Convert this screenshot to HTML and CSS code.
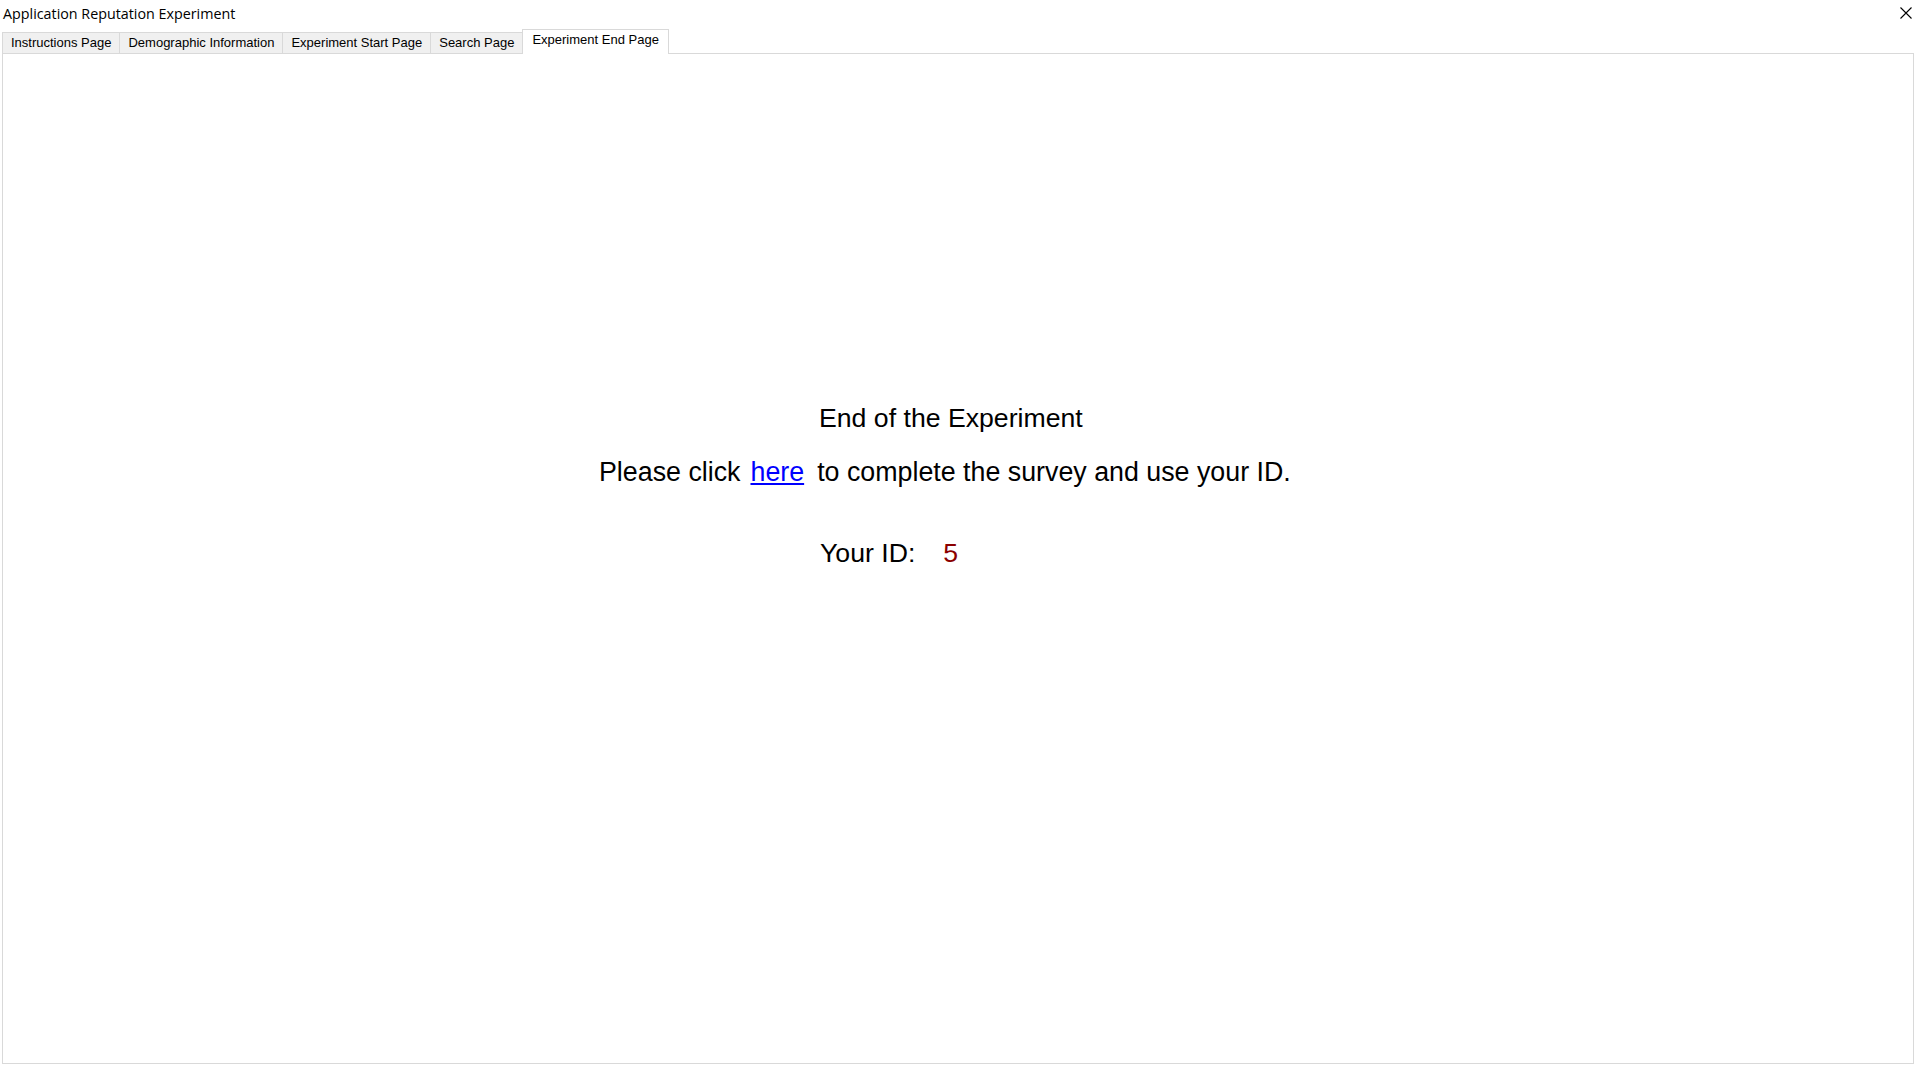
FILE: index.html
```html
<!DOCTYPE html>
<html>
<head>
<meta charset="utf-8">
<title>Application Reputation Experiment</title>
<link rel="stylesheet" href="styles.css">
</head>
<body>
<div class="window">
  <div class="titlebar">
    <span class="title">Application Reputation Experiment</span>
    <span class="close" aria-label="Close">
      <svg width="12" height="12" viewBox="0 0 12 12"><path d="M0.5 0.5 L11.5 11.5 M11.5 0.5 L0.5 11.5" stroke="#000" stroke-width="1.1" fill="none"/></svg>
    </span>
  </div>
  <div class="tabs">
    <div class="tab">Instructions Page</div>
    <div class="tab">Demographic Information</div>
    <div class="tab">Experiment Start Page</div>
    <div class="tab">Search Page</div>
    <div class="tab tab-active">Experiment End Page</div>
  </div>
  <div class="panel">
    <div class="heading">End of the Experiment</div>
    <div class="sentence">
      <span>Please click</span>
      <a class="link" href="#">here</a>
      <span class="rest">to complete the survey and use your ID.</span>
    </div>
    <div class="idrow">
      <span>Your ID:</span>
      <span class="idval">5</span>
    </div>
  </div>
</div>
</body>
</html>
```
FILE: styles.css
```css
html, body {
  margin: 0;
  padding: 0;
  background: #ffffff;
}
.window {
  width: 1920px;
  height: 1080px;
  display: flex;
  flex-direction: column;
  background: #ffffff;
}
.titlebar {
  height: 29px;
  display: flex;
  align-items: flex-start;
  justify-content: space-between;
  padding: 0 8px 0 3px;
}
.title {
  font-family: "Segoe UI", "Open Sans", "Noto Sans", sans-serif;
  font-size: 14.3px;
  color: #000;
  line-height: 20px;
  margin-top: 4px;
}
.close {
  display: flex;
  margin-top: 7px;
}
.tabs {
  height: 24px;
  display: flex;
  align-items: flex-end;
  padding-left: 2px;
  position: relative;
  z-index: 1;
}
.tab {
  font-family: "Liberation Sans", Arial, sans-serif;
  font-size: 13px;
  color: #000;
  height: 21px;
  line-height: 20px;
  padding: 0 8px;
  background: #f0f0f0;
  border: 1px solid #d9d9d9;
  border-bottom: none;
  box-sizing: border-box;
  margin-right: -1px;
  white-space: nowrap;
}
.tab-active {
  height: 25px;
  line-height: 20px;
  background: #ffffff;
  margin: 0 -2px -1px 0;
  padding: 0 9px;
  border-bottom: none;
}
.panel {
  flex: 1;
  margin: 0 6px 16px 2px;
  border: 1px solid #d9d9d9;
  padding-top: 349px;
  display: flex;
  flex-direction: column;
  align-items: flex-start;
  font-family: "Liberation Sans", Arial, sans-serif;
  font-size: 26.67px;
  line-height: 31px;
  color: #000;
}
.heading {
  margin-left: 816px;
}
.sentence {
  margin-top: 23px;
  margin-left: 596px;
  display: flex;
  white-space: nowrap;
  font-size: 26.8px;
}
.link {
  color: #0000ff;
  text-decoration: underline;
  margin-left: 10px;
}
.rest {
  margin-left: 13px;
}
.idrow {
  margin-top: 50px;
  margin-left: 817px;
  display: flex;
}
.idval {
  color: #8b0000;
  margin-left: 28px;
}
```
